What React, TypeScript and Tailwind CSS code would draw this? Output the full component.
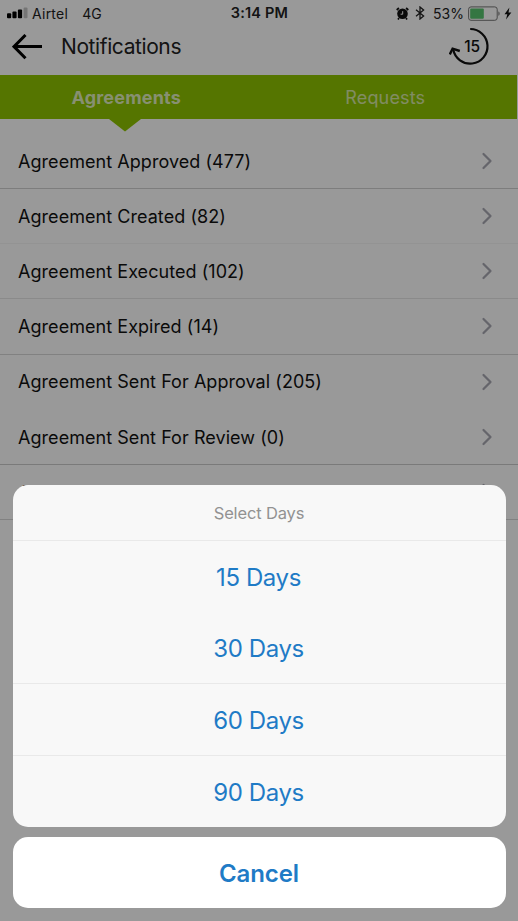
import { ChevronRight } from 'lucide-react';

interface Notification {
    label: string;
    count: number;
    divider: string;
}

const notifications: Notification[] = [
    { label: 'Agreement Approved', count: 477, divider: 'border-[#d0d0d0]' },
    { label: 'Agreement Created', count: 82, divider: 'border-[#f5f5f5]' },
    { label: 'Agreement Executed', count: 102, divider: 'border-[#e6e6e6]' },
    { label: 'Agreement Expired', count: 14, divider: 'border-[#d8d8d8]' },
    { label: 'Agreement Sent For Approval', count: 205, divider: 'border-transparent' },
    { label: 'Agreement Sent For Review', count: 0, divider: 'border-[#cccccc]' },
    { label: 'Amendment Created', count: 10, divider: 'border-[#d8d8d8]' },
];

const dayOptions = [
    { days: 15, divider: 'border-[#e9e9e9]' },
    { days: 30, divider: 'border-transparent' },
    { days: 60, divider: 'border-[#e9e9e9]' },
    { days: 90, divider: 'border-[#e9e9e9]' },
];

const StatusBar = () => (
    <div className="grid grid-cols-[1fr_auto_1fr] h-[26px] items-center pl-[7px] pr-[6px] text-[14px] text-[#222]">
        <div className="flex items-center">
            <svg width="21" height="12" viewBox="0 0 21 12" fill="#000">
                <rect x="0" y="6.2" width="4.2" height="5" rx="1" />
                <rect x="5.4" y="4.6" width="4.2" height="6.6" rx="1" />
                <rect x="10.9" y="2.4" width="4.2" height="8.8" rx="1" />
                <rect x="16.6" y="0.4" width="3.9" height="10.8" rx="1" fill="#c4c4c4" />
            </svg>
            <span className="ml-[4px] tracking-[0.25px]">Airtel</span>
            <span className="ml-[14px]">4G</span>
        </div>
        <div className="text-[14.5px] font-semibold tracking-[0.2px]">3:14 PM</div>
        <div className="flex items-center justify-end">
            <svg width="13" height="13" viewBox="0 0 13 13">
                <circle cx="6.5" cy="6.8" r="5.3" fill="#111" />
                <path d="M0.7 3 2.9 1M12.3 3 10.1 1M3 11l-1 1.4M10 11l1 1.4" stroke="#111" strokeWidth="1.7" />
                <path d="M6.7 4.2V7.2H4.6" stroke="#fff" strokeWidth="1" fill="none" />
            </svg>
            <svg className="ml-[6px]" width="10" height="14" viewBox="0 0 10 14" fill="none" stroke="#222" strokeWidth="1.3">
                <path d="M1 3.8 8.6 10 5 13V1l3.6 3L1 10.2" />
            </svg>
            <span className="ml-[8px]">53%</span>
            <svg className="ml-[4px]" width="33" height="15" viewBox="0 0 33 15">
                <rect x="0.6" y="0.9" width="28.6" height="13.4" rx="2.4" fill="none" stroke="#777" strokeWidth="1" />
                <rect x="2.2" y="2.5" width="13.6" height="10.2" rx="1" fill="#57c56e" />
                <path d="M30.4 5.5c1.6.5 1.6 3.7 0 4.2z" fill="#777" />
            </svg>
            <svg className="ml-[3px]" width="8" height="13" viewBox="0 0 8 13" fill="#111">
                <path d="M5.4 0.5 0.5 7.3h2.8L2 12.5 7.4 5.4H4.5z" />
            </svg>
        </div>
    </div>
);

const BackArrow = () => (
    <svg width="30" height="26" viewBox="0 0 30 26" fill="none" stroke="#000" strokeWidth="3">
        <path d="M30 12.6H2M13.5 1 2 12.6 13.5 24.2" />
    </svg>
);

const DaysBadge = () => (
    <svg width="42" height="40" viewBox="0 0 42 40" fill="none" stroke="#111" strokeWidth="2.2">
        <path d="M21.2 3a17.3 17.3 0 1 1-17 20.5" />
        <path d="M0.8 28.4 3.6 22.6 10.8 25" strokeWidth="2.4" />
        <text x="23.2" y="26" textAnchor="middle" fill="#111" stroke="none" fontSize="15.5" fontWeight="500">
            15
        </text>
    </svg>
);

const Tabs = () => (
    <div className="grid grid-cols-2 h-[44px] mr-[1px] bg-[#8ec300] text-[18px] items-center text-center">
        <div className="relative flex h-full items-center justify-center font-bold text-white/75">
            <span className="-ml-1.5 tracking-[0.2px]">Agreements</span>
            <svg className="absolute left-[109px] top-full" width="32" height="13" viewBox="0 0 32 13" fill="#8ec300">
                <path d="M0 0h32L16 12.5z" />
            </svg>
        </div>
        <div className="pr-[5px] tracking-[0.15px] text-white/65">Requests</div>
    </div>
);

const NotificationRow = ( { label, count, divider }: Notification ) => (
    <div className={`flex h-[55.15px] items-center justify-between border-b pl-[18px] pr-[25px] ${divider}`}>
        <span className="pt-[0.6px] text-[18px] tracking-[0.05px] text-[#111]">
            {label} ({count})
        </span>
        <ChevronRight className="-mr-[7.5px] text-[#a8a8b2]" size={28} strokeWidth={1.9} />
    </div>
);

const ActionSheet = () => (
    <div className="absolute inset-x-0 bottom-0 px-[12.5px] pb-[13px] text-center text-[#1f7bc6]">
        <div className="h-[342px] overflow-hidden rounded-[15px] bg-[#f8f8f8]">
            <div className="flex h-[55px] items-center justify-center pt-[2px] text-[16.5px] tracking-[-0.15px] text-[#929292]">
                Select Days
            </div>
            {dayOptions.map( ( { days, divider } ) => (
                <div key={days} className={`flex h-[71.7px] items-center justify-center border-t pt-[2.5px] pr-px text-[24px] tracking-[-0.4px] ${divider}`}>
                    {days} Days
                </div>
            ) )}
        </div>
        <div className="mt-[10px] flex h-[71px] items-center justify-center rounded-[15px] bg-white pt-[2px] text-[24px] font-semibold tracking-[-0.1px]">
            Cancel
        </div>
    </div>
);

export default function App() {
    return (
        <div className="relative h-[921px] w-[518px] overflow-hidden bg-white font-['Inter',sans-serif]">
            <StatusBar />
            <header className="flex h-[49px] items-start justify-between pl-[12px] pr-[27px]">
                <div className="flex h-[41px] items-center">
                    <BackArrow />
                    <h1 className="ml-[19px] text-[21px] tracking-[-0.4px] text-[#222]">Notifications</h1>
                </div>
                <DaysBadge />
            </header>
            <Tabs />
            <div className="pt-[15px]">
                {notifications.map( ( item ) => (
                    <NotificationRow key={item.label} {...item} />
                ) )}
            </div>
            <div className="absolute inset-0 bg-black/40" />
            <ActionSheet />
        </div>
    );
}
